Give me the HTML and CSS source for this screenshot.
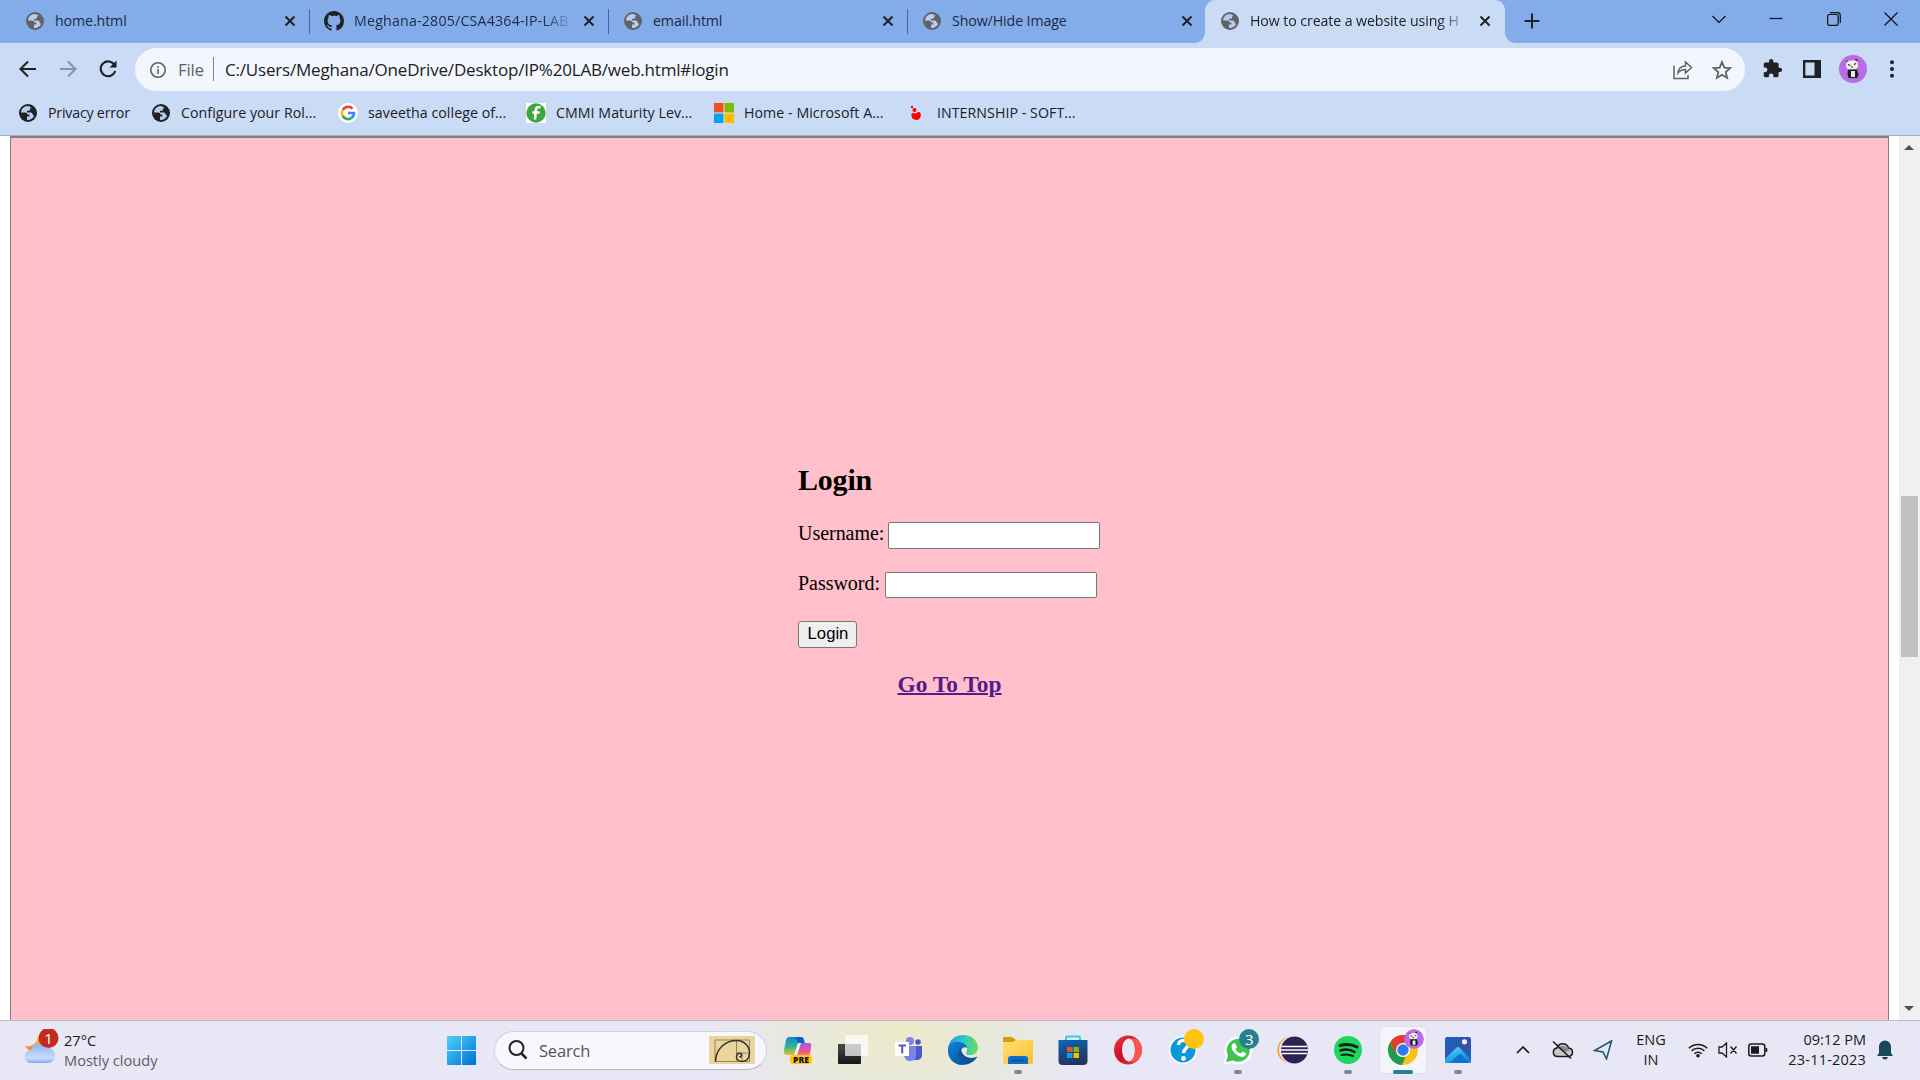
FILE: index.html
```html
<!DOCTYPE html>
<html lang="en">
<head>
<meta charset="utf-8">
<title>How to create a website using HTML</title>
<link rel="stylesheet" href="styles.css">
</head>
<body>
<svg class="defs" width="0" height="0">
  <defs>
    <symbol id="globe" viewBox="0 0 18 18"><circle cx="9" cy="9" r="9" fill="currentColor"/><path class="land" d="M8.500 2.100C5 2.300 2.200 5 2 8.500l4 .1c1.500 0 2.300.8 2.300 2h2v2H8v3.300c3 .4 6-1.400 7.200-4.200-1-.2-1.600-.8-1.700-1.700-.2-1-1-1.500-2-1.500H8V6.800h1.500c1 0 1.500-.5 1.500-1.500V4.200h1.700C11.500 2.800 10 2.100 8.500 2.100z"/></symbol>
    <symbol id="x" viewBox="0 0 12 12"><path d="M1.500 1.500l9 9M10.500 1.500l-9 9" stroke="#202124" stroke-width="2" fill="none"/></symbol>
    <symbol id="panda" viewBox="0 0 28 28"><circle cx="14" cy="14" r="14" fill="#b96ce6"/><circle cx="8.500" cy="7" r="1.500" fill="#222"/><circle cx="17" cy="5.500" r="1.500" fill="#222"/><rect x="7" y="5.500" width="12" height="9" rx="4" fill="#eee" transform="rotate(-8 13 10)"/><path d="M9 9.500l2.500 1M15 9.500l2-1M12 12h2" stroke="#222" stroke-width="1.200"/><path d="M9 14.500h9l1.500 5-1.500 3.500H9.500L8.500 19z" fill="#1c1c20"/><path d="M12 16h4v6h-4z" fill="#ececec"/></symbol>
    <linearGradient id="gwin" x2="1" y2="1"><stop stop-color="#4cd0ff"/><stop offset="1" stop-color="#0070d2"/></linearGradient>
    <linearGradient id="gcloud" x2="0" y2="1"><stop stop-color="#8fb2f0"/><stop offset=".75" stop-color="#c9dcfb"/><stop offset="1" stop-color="#86a9ea"/></linearGradient>
    <linearGradient id="gmoon" x2="0" y2="1"><stop stop-color="#fcc534"/><stop offset="1" stop-color="#f08a1c"/></linearGradient>
    <linearGradient id="gc1" x2="0" y2="1"><stop stop-color="#1684dd"/><stop offset=".5" stop-color="#25b597"/><stop offset="1" stop-color="#e4c32a"/></linearGradient>
    <linearGradient id="gc2" x2="0" y2="1"><stop stop-color="#a25be8"/><stop offset=".6" stop-color="#ec5692"/><stop offset="1" stop-color="#f99761"/></linearGradient>
    <linearGradient id="gedge" x2="1"><stop stop-color="#2197dc"/><stop offset=".5" stop-color="#31c3cf"/><stop offset="1" stop-color="#68df57"/></linearGradient>
    <linearGradient id="gedge2" x2="1" y2="1"><stop stop-color="#0d84d8"/><stop offset="1" stop-color="#0b4c92"/></linearGradient>
    <linearGradient id="gfold" x2="1" y2="1"><stop stop-color="#ffe37a"/><stop offset="1" stop-color="#fcbd2c"/></linearGradient>
    <linearGradient id="gstore" x2="0.300" y2="1"><stop stop-color="#0a68b8"/><stop offset="1" stop-color="#22345e"/></linearGradient>
    <linearGradient id="gopera" x2="1" y2="1"><stop stop-color="#f23546"/><stop offset=".5" stop-color="#c90f26"/><stop offset="1" stop-color="#f0424b"/></linearGradient>
    <linearGradient id="gphoto" x2="1" y2="1"><stop stop-color="#1368c4"/><stop offset=".6" stop-color="#3a4da8"/><stop offset="1" stop-color="#0f6fd0"/></linearGradient>
    <linearGradient id="gmount" x2="0.600" y2="1"><stop stop-color="#4bdcfb"/><stop offset="1" stop-color="#1188dc"/></linearGradient>
    <linearGradient id="gdark" x2="0" y2="1"><stop stop-color="#4a4a4a"/><stop offset="1" stop-color="#171717"/></linearGradient>
  </defs>
</svg>

<header class="tabstrip">
  <div class="tab first"><svg class="fav"><use href="#globe"/></svg><span class="title">home.html</span><svg class="close"><use href="#x"/></svg></div>
  <div class="tab"><svg class="fav hub" viewBox="0 0 16 16"><path fill="#1f2328" d="M8 0C3.580 0 0 3.580 0 8c0 3.540 2.290 6.530 5.470 7.590.4.070.55-.17.55-.38 0-.19-.01-.82-.01-1.490-2.010.37-2.530-.49-2.690-.94-.09-.23-.48-.94-.82-1.130-.28-.15-.68-.52-.01-.53.63-.01 1.080.58 1.230.82.72 1.210 1.870.87 2.330.66.070-.52.280-.87.510-1.070-1.780-.2-3.640-.89-3.640-3.950 0-.87.310-1.590.82-2.150-.08-.2-.36-1.020.080-2.120 0 0 .67-.21 2.200.82.64-.18 1.320-.27 2-.27s1.360.09 2 .27c1.530-1.040 2.200-.82 2.200-.82.440 1.100.160 1.920.080 2.120.51.56.82 1.270.82 2.150 0 3.070-1.870 3.750-3.650 3.950.290.25.540.73.540 1.480 0 1.070-.01 1.930-.01 2.200 0 .21.150.46.550.38A8.010 8.010 0 0 0 16 8c0-4.420-3.580-8-8-8z"/></svg><span class="title fade git">Meghana-2805/CSA4364-IP-LAB</span><svg class="close"><use href="#x"/></svg></div>
  <div class="tab"><svg class="fav"><use href="#globe"/></svg><span class="title">email.html</span><svg class="close"><use href="#x"/></svg></div>
  <div class="tab last"><svg class="fav"><use href="#globe"/></svg><span class="title">Show/Hide Image</span><svg class="close"><use href="#x"/></svg></div>
  <div class="tab active"><svg class="fav"><use href="#globe"/></svg><span class="title fade">How to create a website using H</span><svg class="close"><use href="#x"/></svg></div>
  <svg class="newtab" viewBox="0 0 16 16"><path d="M8 .5v15M.5 8h15" stroke="#202124" stroke-width="2"/></svg>
  <div class="wincontrols">
    <svg viewBox="0 0 14 14"><path d="M.5 4l6.500 6.500L13.500 4"/></svg>
    <svg viewBox="0 0 14 14"><path d="M.5 6.500h13"/></svg>
    <svg viewBox="0 0 14 14"><rect x=".7" y="2.500" width="10.500" height="10.800" rx="1.500"/><path d="M3 .7h7.500q2.800 0 2.800 2.800v7.500"/></svg>
    <svg viewBox="0 0 14 14"><path d="M.5.5l13 13M13.500.5l-13 13"/></svg>
  </div>
</header>

<nav class="toolbar">
  <svg class="nav" viewBox="0 0 20 20"><path d="M18 10H3M10 2.500L2.500 10l7.500 7.500"/></svg>
  <svg class="nav dim" viewBox="0 0 20 20"><path d="M2 10h15M10 2.500l7.500 7.500-7.500 7.500"/></svg>
  <svg class="nav" viewBox="0 0 20 20"><path d="M16.500 6A7.400 7.400 0 1 0 17.200 12"/><path d="M18.500 1.500v7h-7z" fill="#202124" stroke="none"/></svg>
  <div class="omnibox">
    <svg class="info" viewBox="0 0 16 16"><circle cx="8" cy="8" r="7.200"/><path d="M8 7v5M8 4v1.800"/></svg>
    <span class="scheme">File</span><i class="bar"></i><span class="url">C:/Users/Meghana/OneDrive/Desktop/IP%20LAB/web.html#login</span>
    <svg class="share" viewBox="0 0 20 20"><path d="M1 5.500V18.500h14V15M5 13c.5-5 3-7 7.500-7V2l6 5.500-6 5.500V9.500C9 9.500 7 10.500 5 13z"/></svg>
    <svg class="star" viewBox="0 0 20 20"><path d="M10 2l2.300 5.600 6 .5-4.600 3.900 1.400 5.900L10 14.800l-5.100 3.100 1.400-5.900L1.700 8.100l6-.5z"/></svg>
  </div>
  <div class="actions">
    <svg viewBox="0 0 24 24" width="21" height="21"><path fill="#202124" d="M20.500 11H19V7c0-1.100-.9-2-2-2h-4V3.500a2.500 2.500 0 0 0-5 0V5H4c-1.100 0-1.990.9-1.990 2v3.800H3.500a2.700 2.700 0 0 1 0 5.400H2V20c0 1.100.9 2 2 2h3.800v-1.500a2.700 2.700 0 0 1 5.400 0V22H17c1.100 0 2-.9 2-2v-4h1.500a2.500 2.500 0 0 0 0-5z"/></svg>
    <svg viewBox="0 0 18 18" width="18" height="18"><path fill="#202124" fill-rule="evenodd" d="M0 0h18v18H0zM2.300 2.500v13h9.200v-13z"/></svg>
    <svg width="28" height="28"><use href="#panda"/></svg>
    <svg viewBox="0 0 4 18" width="4" height="18"><g fill="#202124"><circle cx="2" cy="2.300" r="2"/><circle cx="2" cy="9" r="2"/><circle cx="2" cy="15.700" r="2"/></g></svg>
  </div>
</nav>

<nav class="bookmarks">
  <a class="b1"><svg class="dark"><use href="#globe"/></svg><span>Privacy error</span></a>
  <a class="b2"><svg class="dark"><use href="#globe"/></svg><span>Configure your Rol...</span></a>
  <a class="b3"><svg class="wide" viewBox="0 0 20 20"><circle cx="10" cy="10" r="10" fill="#fff"/><g fill="none" stroke-width="2.600"><path d="M14.600 5.700A6.100 6.100 0 0 0 4.800 7" stroke="#ea4335"/><path d="M4.800 6.800a6.200 6.200 0 0 0 0 6.400" stroke="#fbbc05"/><path d="M4.700 13a6.100 6.100 0 0 0 9 1.800" stroke="#34a853"/><path d="M13.500 15c1.700-1.300 2.600-3 2.500-5h-6" stroke="#4285f4"/></g></svg><span>saveetha college of...</span></a>
  <a class="b3"><svg class="wide" viewBox="0 0 20 20"><path fill="#fff" d="M0 0h20v20H0z"/><circle cx="10" cy="10" r="9.700" fill="#3fa63f"/><path d="M14.500 4.500c-3-1.300-4.500 0-4.700 3L9 16.500M6.500 9.500h7" stroke="#fff" stroke-width="2.600" fill="none"/></svg><span>CMMI Maturity Lev...</span></a>
  <a class="b4"><svg class="wide" viewBox="0 0 20 20"><path fill="#e3e3dc" d="M0 0h20v20H0z"/><path fill="#f25022" d="M0 0h9.500v9.500H0z"/><path fill="#7fba00" d="M10.500 0H20v9.500h-9.500z"/><path fill="#00a4ef" d="M0 10.500h9.500V20H0z"/><path fill="#ffb900" d="M10.500 10.500H20V20h-9.500z"/></svg><span>Home - Microsoft A...</span></a>
  <a><svg class="wide" viewBox="0 0 20 20"><g fill="#f00"><circle cx="5" cy="4" r="1.200"/><circle cx="7.500" cy="7" r="2"/><path d="M4.500 11c1-2 3 0 4-.5s2-2 4-1.500c2.500 1 1.500 8-3 8s-5.500-4-5-6z"/></g></svg><span>INTERNSHIP - SOFT...</span></a>
</nav>

<main class="viewport">
  <section class="page">
    <form class="login">
      <h2>Login</h2>
      <div class="row"><label>Username:</label><input type="text"></div>
      <div class="row second"><label>Password:</label><input type="password"></div>
      <button type="button">Login</button>
      <h3><a href="#top">Go To Top</a></h3>
    </form>
  </section>
  <aside class="scrollbar"><i class="arrow up"></i><i class="thumb"></i><i class="arrow down"></i></aside>
</main>

<footer class="taskbar">
  <div class="weather">
    <svg viewBox="0 0 36 36" width="36" height="36"><path d="M13 6c2 6-4 13-12 11 2 4 7 6 12 4l8-8z" fill="url(#gmoon)"/><path d="M7 34a6.500 6.500 0 0 1 0-13 8 8 0 0 1 15-2 7.500 7.500 0 0 1 3 15z" fill="url(#gcloud)"/><circle cx="24.500" cy="9" r="10" fill="#c42b1c"/><text x="24.500" y="14.500" text-anchor="middle" font-size="15" fill="#fff">1</text></svg>
    <div><b>27°C</b><span>Mostly cloudy</span></div>
  </div>
  <svg class="start" viewBox="0 0 29 29"><path fill="url(#gwin)" d="M1 0h13v14H0V1q0-1 1-1zM15 0h13q1 0 1 1v13H15zM0 15h14v14H1q-1 0-1-1zM15 15h14v13q0 1-1 1H15z"/></svg>
  <div class="search">
    <svg viewBox="0 0 20 20" width="20" height="20"><circle cx="8.500" cy="8" r="7" fill="none" stroke="#222" stroke-width="2"/><path d="M13.500 13.500l5 5" stroke="#222" stroke-width="2.500"/></svg>
    <span>Search</span>
    <svg viewBox="0 0 46 28" width="46" height="28"><path fill="#ecd59c" d="M0 0h46v28H0z"/><g fill="none" stroke="#8f8667"><path d="M6 4h34.500v21.500H6zM27.500 4v21.500M27.500 17h13M33 17v8.500"/></g><path d="M6.500 25.500C7 12 17 4.500 27.500 4.500c8 0 13 6 13 12.500 0 5-3 8.500-7 8.500-3.500 0-6-2-6-4.500s1.500-3.800 3-3.800 2.500 1 2 2.500-1.500 1.500-2 .5" fill="none" stroke="#333" stroke-width="1.500"/></svg>
  </div>
  <div class="apps">
    <div class="app"><svg viewBox="0 0 32 32"><path d="M7 3h12q3 0 4 6l-5 1-4 11H5q-4 0-3-5L4 6q1-3 3-3z" fill="url(#gc1)"/><path d="M15 3h4q3 0 3 6h-6q-1-4-4-5z" fill="#155dcc"/><path d="M18 9h9q3 0 2 4l-1 7q-1 3-4 3H14z" fill="url(#gc2)"/><path d="M16 9h3l-4 12h-3z" fill="#f6f2fa"/><rect x="8" y="21" width="22" height="9" rx="3" fill="#ffc70f"/><text x="19" y="28.600" text-anchor="middle" font-size="8.500" font-weight="800" fill="#111">PRE</text></svg></div>
    <div class="app"><svg viewBox="0 0 32 32"><path d="M1 10h23v19q0 1-1 1H2q-1 0-1-1z" fill="url(#gdark)"/><path d="M9 1h21q1 0 1 1v20H9q-1 0-1-1V2q0-1 1-1z" fill="#fff" opacity=".72"/></svg></div>
    <div class="app"><svg viewBox="0 0 32 32"><circle cx="18" cy="7" r="4" fill="#7b83eb"/><circle cx="26" cy="8" r="2.800" fill="#5059c9"/><path d="M22 12h8v10q-1 4-5 4h-3z" fill="#5059c9"/><path d="M12 12h12v9q0 6-6 6-5 0-6-6z" fill="#7b83eb"/><path fill="#fff" d="M3 8h14v14H3z"/><path d="M6.500 11.500h7.500M10.200 11.500v8" stroke="#5059c9" stroke-width="2"/></svg></div>
    <div class="app"><svg viewBox="0 0 32 32"><path d="M1 15C2 6 8 1 16 1c9 0 15 6 15 12.500 0 5-4 7.500-8 7.500-5 0-4-2-3-4 1-3-1-6-5-6-7 0-12 3-14 9z" fill="url(#gedge)"/><path d="M1 15c1-6 6-8 11-7 5 .5 8 4 8 6-3-2-7 1-6 6 1 4 5 8 11 7-3 3-6 4-10 4C7 31 0 24 1 15z" fill="url(#gedge2)"/><path d="M14 14c-5 4-3 14 6 16 4-.5 8-3 10.500-7.500C24 26 14 23 14 14z" fill="#10549d"/></svg></div>
    <div class="app run"><svg viewBox="0 0 32 32"><path d="M1 4q0-1 1-1h8l4 3v4H1z" fill="#d99a07"/><path d="M1 8h10l3-2h16q1 0 1 1v21q0 2-2 2H3q-2 0-2-2z" fill="url(#gfold)"/><path d="M6 30v-5q0-3 3-3h14q3 0 3 3v5z" fill="#0b6fc6"/><path d="M10 26.500h12" stroke="#0a4c93" stroke-width="1.500"/></svg></div>
    <div class="app"><svg viewBox="0 0 32 32"><path d="M9 8V4q0-1.500 1.500-1.500h11Q23 2.500 23 4v4" fill="none" stroke="#35c8f4" stroke-width="2"/><path d="M1.500 6h29v21q0 4-4 4h-21q-4 0-4-4z" fill="url(#gstore)"/><path fill="#f25022" d="M10 13h5.500v5H10z"/><path fill="#7fba00" d="M16.500 13H22v5h-5.500z"/><path fill="#00a4ef" d="M10 19h5.500v5H10z"/><path fill="#ffb900" d="M16.500 19H22v5h-5.500z"/></svg></div>
    <div class="app"><svg viewBox="0 0 32 32"><path fill="url(#gopera)" fill-rule="evenodd" d="M16 1.500C8 1.500 2 8 2 16s6 14.500 14 14.500S30 24 30 16 24 1.500 16 1.500zM17 4.500c3.500 0 6 5 6 11.500s-2.500 11.500-6 11.500S10 22.500 10 16 13 4.500 17 4.500z"/><path fill="#ff5350" d="M17 4.500c10-2 13 6 13 11.500S26 30 17 27.500c3.500 0 6-5 6-11.500s-2.500-11.500-6-11.500z"/></svg></div>
    <div class="app"><svg viewBox="0 0 32 32"><circle cx="16" cy="16" r="14" fill="#fff"/><circle cx="16" cy="16" r="12.500" fill="#0a98d8"/><path d="M11.500 11c0-6 10-6 10-1 0 4-5 4-5 9" fill="none" stroke="#fff" stroke-width="3.500"/><circle cx="16.500" cy="24.500" r="2.400" fill="#fff"/></svg><i class="badge yellow"></i></div>
    <div class="app run"><svg viewBox="0 0 32 32"><path d="M1 31l2.500-9A14 14 0 1 1 10 29z" fill="#fff"/><path d="M4 28l2-6.500A11.500 11.500 0 1 1 11 26.500z" fill="#40c351"/><path d="M11 9.500l2-.5 2 4-1.500 2c1 2 2.500 3.500 5 4.500l2-2 3.500 1.800c0 3-3 4-5 3.500C14 21.500 10 17 9.500 13c0-1.500.5-2.700 1.500-3.500z" fill="#fff"/></svg><i class="badge teal">3</i></div>
    <div class="app"><svg viewBox="0 0 32 32"><circle cx="14" cy="16" r="13.500" fill="#f7941e"/><circle cx="16" cy="16" r="14" fill="#eee8fa"/><circle cx="17.500" cy="16" r="13.500" fill="#2c2255"/><path d="M4.500 12.500h26M4 16h27M4.500 19.500h26" stroke="#fff" stroke-width="1.700"/></svg></div>
    <div class="app run"><svg viewBox="0 0 32 32"><circle cx="16" cy="16" r="14" fill="#1ed760"/><g fill="none" stroke="#111b14" stroke-linecap="round"><path d="M8 11.500c6-1.600 12-1 17 1.500" stroke-width="3"/><path d="M8.500 16.500c5-1.500 10-1 14 1.500" stroke-width="2.500"/><path d="M9.500 21c4-1 8-.8 11.500 1" stroke-width="2"/></g></svg></div>
    <div class="app current"><svg viewBox="0 0 32 32"><circle cx="16" cy="16" r="15" fill="#fbc116"/><path d="M3 8.500A15 15 0 0 1 29 8.500H16L9.500 20z" fill="#e33b2e"/><path d="M3 8.500l6.500 11.300q3 4 9 3.200L15 31A15 15 0 0 1 3 8.500z" fill="#229a4c"/><circle cx="16" cy="16" r="7" fill="#fff"/><circle cx="16" cy="16" r="5.700" fill="#2f7bea"/></svg><svg class="badge"><use href="#panda"/></svg></div>
    <div class="app run"><svg viewBox="0 0 32 32"><rect x="3" y="3" width="26" height="26" rx="2" fill="url(#gphoto)"/><path d="M3 25l11-11q2-2 4 0l11 12v1q0 2-2 2H5q-2 0-2-2z" fill="url(#gmount)"/><path d="M8 29l8-8q2-2 4 0l7 8z" fill="#1272ca"/><circle cx="22.500" cy="7.800" r="2.600" fill="#e8f2fb"/></svg></div>
  </div>
  <div class="tray">
    <svg class="chev" viewBox="0 0 14 8"><path d="M1 7l6-6 6 6" fill="none" stroke="#1b1b1b" stroke-width="1.700"/></svg>
    <svg class="cloud" viewBox="0 0 22 18"><path d="M5 15.500a4.300 4.300 0 0 1 0-8.500 6 6 0 0 1 11.500 0 4.300 4.300 0 0 1 .5 8.500z" fill="#c9c9cb" stroke="#1b1b1b" stroke-width="1.500"/><path d="M6 7q4-4 10 0l1 3-6 1z" fill="#888"/><path d="M1 .5l18 17" stroke="#1b1b1b" stroke-width="1.500"/></svg>
    <svg class="loc" viewBox="0 0 20 20"><path d="M18.500 1L1.500 10.500l8.500 1.500 3.500 7z" fill="none" stroke="#1d5568" stroke-width="1.500"/></svg>
    <div class="lang"><span>ENG</span><span>IN</span></div>
    <svg class="wifi" viewBox="0 0 20 16"><g fill="none" stroke="#1b1b1b" stroke-width="1.500"><path d="M.8 6.200a13 13 0 0 1 18.400 0M3.600 9a9 9 0 0 1 12.800 0M6.300 11.700a5.200 5.200 0 0 1 7.400 0"/></g><circle cx="10" cy="13.800" r="1.800" fill="#1b1b1b"/></svg>
    <svg class="vol" viewBox="0 0 20 16"><path d="M1 5h3l4.500-4v14L4 11H1zM12.500 4.500l6 7M18.500 4.500l-6 7" fill="none" stroke="#1b1b1b" stroke-width="1.300"/></svg>
    <svg class="bat" viewBox="0 0 20 14"><rect x=".8" y="1" width="16" height="12" rx="2.500" fill="none" stroke="#1b1b1b" stroke-width="1.500"/><path d="M3 3.300h8v7.400H3zM17.500 5H19q1 2 0 4h-1.500z" fill="#1b1b1b"/></svg>
    <div class="clock"><span>09:12 PM</span><span class="date">23-11-2023</span></div>
    <svg class="bell" viewBox="0 0 16 20"><path d="M8 .5a6 6 0 0 1 6 6V13l2 3H0l2-3V6.500a6 6 0 0 1 6-6zM5 17h6q-.7 2.500-3 2.500T5 17z" fill="#17495b"/></svg>
  </div>
</footer>
</body>
</html>
```
FILE: styles.css
```css
* { box-sizing: border-box; }
body {
  margin: 0;
  width: 1920px;
  height: 1080px;
  overflow: hidden;
  display: flex;
  flex-direction: column;
  font-family: "Open Sans", "Noto Sans", sans-serif;
  color: #202124;
  background: #fff;
}
svg { flex: none; display: block; }
.defs { position: absolute; }

/* Tab strip */
.tabstrip { height: 43px; flex: none; display: flex; align-items: flex-start; background: #84ace9; padding-left: 11px; }
.tab { position: relative; width: 299px; height: 43px; display: flex; align-items: center; padding: 0 14px 1px 15px; color: #1b2a45; }
.tab::after { content: ""; position: absolute; right: 0; top: 9px; width: 1px; height: 25px; background: #4b6591; }
.tab.last { width: 297px; padding-right: 12px; }
.tab.last::after, .tab.active::after { display: none; }
.tab.active { width: 300px; padding-left: 16px; background: #cadbf6; border-radius: 10px 10px 0 0; color: #202124; }
.tab.active::before {
  content: ""; position: absolute; left: -10px; right: -10px; bottom: 0; height: 10px;
  background:
    radial-gradient(circle at 0 0, transparent 9.500px, #cadbf6 10px) left / 10px 10px no-repeat,
    radial-gradient(circle at 100% 0, transparent 9.500px, #cadbf6 10px) right / 10px 10px no-repeat;
}
.fav { width: 18px; height: 18px; color: #5f6368; margin-right: 11px; }
.fav.hub { width: 20px; height: 20px; margin: 0 10px 0 -1px; }
.land { fill: #b9cdee; }
.title { flex: 1; font-size: 14.200px; letter-spacing: -.1px; white-space: nowrap; overflow: hidden; padding-bottom: 2px; }
.title.fade { mask-image: linear-gradient(to right, #000 188px, transparent 220px); margin-right: 10px; }
.title.git { letter-spacing: .2px; }
.close { width: 12px; height: 12px; }
.newtab { width: 16px; height: 16px; margin: 13px 0 0 19px; }
.wincontrols { margin-left: auto; display: flex; gap: 43.500px; padding: 12px 22px 0 0; }
.wincontrols svg { width: 14px; height: 14px; fill: none; stroke: #111; stroke-width: 1.200; }

/* Toolbar */
.toolbar { height: 48px; flex: none; display: flex; align-items: center; background: #cadbf6; padding: 5px 26px 0 18px; }
.nav { width: 20px; height: 20px; margin: 0 20px 2px 0; fill: none; stroke: #202124; stroke-width: 2.100; }
.nav.dim { stroke: #8793aa; }
.nav:nth-child(3) { margin-right: 17px; }
.omnibox { width: 1610px; height: 43px; border-radius: 22px; background: #f3f7fd; display: flex; align-items: center; padding: 0 13px 0 15px; font-size: 17px; }
.info { width: 16px; height: 16px; fill: none; stroke: #5f6368; stroke-width: 1.600; margin-right: 12px; }
.scheme { color: #5f6368; width: 35px; letter-spacing: -.3px; padding-bottom: 1px; }
.bar { width: 1px; height: 24px; background: #80868b; margin: 0 11px 2px 0; }
.url { flex: 1; letter-spacing: -.190px; padding-bottom: 1px; white-space: nowrap; }
.share, .star { width: 20px; height: 20px; fill: none; stroke: #5f6368; stroke-width: 1.500; }
.share { margin-right: 19px; }
.star { stroke-width: 1.800; }
.actions { margin-left: auto; display: flex; align-items: center; width: 132px; padding-bottom: 2px; }
.actions svg:nth-child(1) { margin-right: 20px; }
.actions svg:nth-child(2) { margin-right: 18px; }
.actions svg:nth-child(3) { margin-right: 23px; }

/* Bookmarks */
.bookmarks { height: 45px; flex: none; display: flex; align-items: center; background: #cadbf6; border-bottom: 1px solid #9fb0cd; padding: 0 0 1px 19px; font-size: 14.200px; }
.bookmarks a { display: flex; align-items: center; white-space: nowrap; letter-spacing: .050px; }
.bookmarks span { padding-bottom: 1px; }
.bookmarks .b1 { width: 133px; letter-spacing: -.2px; }
.bookmarks .b2 { width: 187px; }
.bookmarks .b3 { width: 188px; }
.bookmarks .b4 { width: 193px; }
.bookmarks svg { width: 18px; height: 18px; margin-right: 11px; }
.bookmarks svg.wide { width: 20px; height: 20px; margin: 0 10px 0 -1px; }
.dark { color: #202124; }

/* Page */
.viewport { height: 884px; flex: none; display: flex; background: #fff; padding-left: 10px; font-family: "Liberation Serif", serif; color: #000; }
.page { width: 1879px; border: 1px solid #808080; border-top-width: 2px; border-bottom: 0; background: #ffc0cb; display: flex; justify-content: center; }
.login { width: 303px; padding-top: 325px; font-size: 20px; }
.login h2 { font-size: 30px; line-height: 34px; letter-spacing: -.2px; margin: 0 0 25px; }
.row { display: flex; height: 27px; align-items: center; margin-bottom: 23px; }
.row.second { height: 26px; }
.row label { margin: 0 4px 4px 0; letter-spacing: -.030px; }
.row.second label { margin-right: 5px; }
.row input { width: 212px; height: 100%; border: 1px solid #767676; border-radius: 2px; background: #fff; padding: 0; }
.login button { display: block; width: 59px; height: 27px; border: 1px solid #767676; border-radius: 3px; background: #efefef; font: 16.670px "Liberation Sans", sans-serif; padding: 0 0 2px 1px; color: #000; }
.login h3 { font-size: 23.400px; line-height: 27px; margin: 23px 0 0; text-align: center; }
.login a { color: #551a8b; text-decoration-thickness: 2px; }
.scrollbar { margin-left: auto; width: 21px; background: #f0f0f0; display: flex; flex-direction: column; align-items: center; padding: 9px 1px 9px 0; }
.arrow { width: 0; height: 0; border: 5px solid transparent; }
.arrow.up { border-top: 0; border-bottom-color: #505050; }
.arrow.down { border-bottom: 0; border-top-color: #505050; margin-top: auto; }
.thumb { width: 17px; height: 161px; background: #c1c1c1; margin-top: 346px; }

/* Taskbar */
.taskbar { height: 60px; flex: none; display: flex; align-items: center; border-top: 1px solid #b9b9c2; padding-bottom: 1px; background: radial-gradient(ellipse 200px 120px at 900px 10px, #ebebc8, rgba(233,233,205,.6) 50%, transparent), #e8e7f6; }
.weather { width: 422px; margin-left: 25px; display: flex; align-items: center; gap: 3px; }
.weather svg { margin: -6px 1px 0 -1px; }
.weather div { display: flex; flex-direction: column; font-size: 14.600px; line-height: 20px; padding-bottom: 1px; }
.weather b { font-weight: 400; color: #1b1b1b; }
.weather span { color: #5c5c66; }
.start { width: 29px; height: 29px; margin-right: 18px; }
.search { width: 273px; height: 39px; border-radius: 20px; border: 1px solid #d3d2e2; border-bottom-color: #b9b8c8; background: #f7f7fd; display: flex; align-items: center; padding: 0 11px 0 13px; }
.search span { flex: 1; margin-left: 11px; font-size: 16.500px; color: #555; letter-spacing: -.2px; }
.apps { display: flex; margin-left: 4px; }
.app { position: relative; width: 54.930px; height: 48px; display: flex; align-items: center; justify-content: center; }
.app svg { width: 32px; height: 32px; }
.app.run::after, .app.current::after { content: ""; position: absolute; bottom: 0; width: 8px; height: 4px; border-radius: 2px; background: #85858c; }
.app.current::after { width: 20px; background: #27808f; }
.app.current::before { content: ""; position: absolute; inset: 0 3.500px; border-radius: 5px; background: #f4f4fb; border: 1px solid #dedeeb; }
.app.current svg { position: relative; }
.app .badge, .app.current .badge { position: absolute; top: 3px; right: 6px; width: 20px; height: 20px; border-radius: 50%; }
.yellow { background: #ffc20e; }
.teal { background: #27808f; color: #fff; font: 15px/20px "Open Sans", sans-serif; text-align: center; }
.tray { flex: 1; display: flex; align-items: center; margin-left: 31px; }
.chev { width: 14px; height: 8px; margin-right: 22px; }
.cloud { width: 22px; height: 18px; margin-right: 19px; }
.loc { width: 20px; height: 20px; margin-right: 19px; }
.lang, .clock { display: flex; flex-direction: column; font-size: 14.500px; line-height: 20px; color: #1b1b1b; white-space: nowrap; padding-bottom: 1px; }
.lang { width: 38px; align-items: center; margin-right: 18px; }
.wifi { width: 20px; height: 16px; margin-right: 10px; }
.vol { width: 20px; height: 16px; margin-right: 10px; }
.bat { width: 20px; height: 14px; }
.clock { width: 98px; align-items: flex-end; margin-right: 11px; }
.date { letter-spacing: .2px; }
.bell { width: 16px; height: 20px; }
```
